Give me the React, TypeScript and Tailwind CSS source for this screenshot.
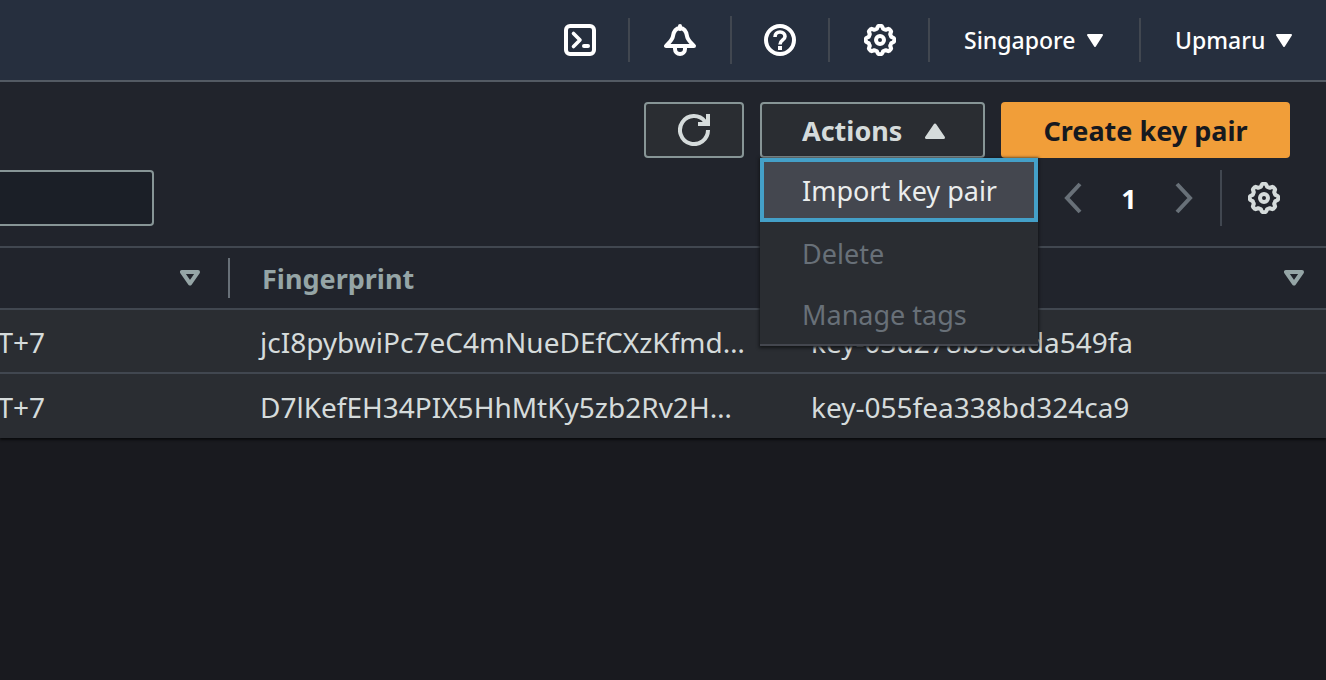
import type { ReactNode } from "react";

const GEAR_POINTS = Array.from({ length: 96 }, (_, i) => {
  const a = (i / 96) * Math.PI * 2;
  const wave = Math.cos(8 * a);
  const r = 12.9 + 1.3 * Math.tanh(wave * 2.6);
  return `${(16 + r * Math.sin(a)).toFixed(2)},${(16 - r * Math.cos(a)).toFixed(2)}`;
}).join(" ");

function GearIcon() {
  return (
    <svg viewBox="0 0 32 32" className="size-8" fill="none" stroke="currentColor" strokeWidth="4" strokeLinejoin="round" aria-hidden="true">
      <polygon points={GEAR_POINTS} />
      <circle cx="16" cy="16" r="4" />
    </svg>
  );
}

function TerminalIcon() {
  return (
    <svg viewBox="0 0 32 32" className="size-8" fill="none" stroke="currentColor" strokeWidth="4" aria-hidden="true">
      <rect x="2" y="2" width="28" height="28" rx="4" />
      <path d="M9.500 9.500l6.500 6.500-6.500 6.500" strokeLinecap="round" strokeLinejoin="round" strokeWidth="3.600" />
      <path d="M20 22h4" strokeLinecap="round" />
    </svg>
  );
}

function BellIcon() {
  return (
    <svg viewBox="0 0 32 32" className="size-8" fill="none" stroke="currentColor" strokeWidth="4" strokeLinejoin="round" aria-hidden="true">
      <path d="M16 4C10.500 4.500 9.500 8.500 9 12C8.500 16 5.500 18 2 22H30C26.500 18 23.500 16 23 12C22.500 8.500 21.500 4.500 16 4Z" />
      <path d="M16 2v3" strokeLinecap="round" />
      <path d="M11 23v2a5 5 0 0 0 10 0v-2" />
    </svg>
  );
}

function HelpIcon() {
  return (
    <svg viewBox="0 0 32 32" className="size-8" fill="none" stroke="currentColor" strokeWidth="4" aria-hidden="true">
      <circle cx="16" cy="16" r="14" />
      <path d="M11 13c0-3 2-5 5-5s5 1.800 5 4.500c0 3.500-5 3.500-5 8" strokeWidth="3.600" />
      <path d="M16 22v4" />
    </svg>
  );
}

function RefreshIcon() {
  return (
    <svg viewBox="0 0 32 32" className="size-8" fill="none" stroke="currentColor" strokeWidth="4" aria-hidden="true">
      <path d="M30 16A14 14 0 1 1 27 7.400L28.500 9.500" />
      <path d="M30 0v10H20" />
    </svg>
  );
}

function Chevron({ d }: { d: string }) {
  return (
    <svg viewBox="0 0 20 32" className="h-8 w-5" fill="none" stroke="currentColor" strokeWidth="4" aria-hidden="true">
      <path d={d} />
    </svg>
  );
}

function CaretDown() {
  return (
    <svg viewBox="0 0 16 13" className="h-[13px] w-4" fill="currentColor" stroke="currentColor" strokeWidth="2" strokeLinejoin="round" aria-hidden="true">
      <path d="M1 1h14L8 12z" />
    </svg>
  );
}

function CaretUp() {
  return (
    <svg viewBox="0 0 20 16" className="h-4 w-5" fill="currentColor" stroke="currentColor" strokeWidth="3" strokeLinejoin="round" aria-hidden="true">
      <path d="M1.500 14.500h17L10 2z" />
    </svg>
  );
}

function SortIcon() {
  return (
    <svg viewBox="0 0 20 16" className="h-4 w-5" fill="none" stroke="currentColor" strokeWidth="4" strokeLinejoin="round" aria-hidden="true">
      <path d="M2 2h16l-8 11.500z" />
    </svg>
  );
}

function NavIcon({ label, children }: { label: string; children: ReactNode }) {
  return (
    <button aria-label={label} className="flex w-24 justify-center">
      {children}
    </button>
  );
}

function Divider() {
  return <span className="h-11 w-0.5 bg-[#414750]" />;
}

const rows = [
  { created: "GMT+7", fingerprint: "jcI8pybwiPc7eC4mNueDEfCXzKfmd…", id: "key-03d278b36ada549fa" },
  { created: "GMT+7", fingerprint: "D7lKefEH34PIX5HhMtKy5zb2Rv2H…", id: "key-055fea338bd324ca9" },
];

export default function App() {
  return (
    <div className="min-h-screen overflow-x-hidden bg-[#191a1f] font-['Noto_Sans',sans-serif] text-[27px] leading-9 text-[#d5dbdb]">
      <header className="flex h-[82px] items-center justify-end border-b-2 border-[#545b64] bg-[#262f3e] text-[23px] font-medium text-white">
        <NavIcon label="CloudShell"><TerminalIcon /></NavIcon>
        <Divider />
        <div className="px-0.5"><NavIcon label="Notifications"><BellIcon /></NavIcon></div>
        <span className="h-12 w-0.5 bg-[#414750]" />
        <NavIcon label="Help"><HelpIcon /></NavIcon>
        <Divider />
        <div className="pl-0.5"><NavIcon label="Settings"><GearIcon /></NavIcon></div>
        <Divider />
        <button className="flex w-[209px] items-center justify-between pr-9 pl-[34px]">
          Singapore <CaretDown />
        </button>
        <Divider />
        <button className="flex w-[185px] items-center justify-between pr-[34px] pl-[34px]">
          Upmaru <CaretDown />
        </button>
      </header>

      <main className="bg-[#21242c] shadow-[0_2px_2px_#0a0b0d]">
        <div className="flex justify-end gap-4 pt-5 pr-9">
          <button aria-label="Refresh" className="flex h-14 w-[100px] items-center justify-center rounded border-2 border-[#879596] bg-[#2a2d32]">
            <RefreshIcon />
          </button>
          <div className="relative">
            <button aria-expanded="true" className="flex h-14 w-[225px] items-center justify-between rounded border-2 border-[#879596] bg-[#2a2d32] pt-px pr-[38px] pl-10 font-bold">
              Actions <CaretUp />
            </button>
            <div role="menu" className="absolute top-full left-0 z-10 flex w-[278px] flex-col border-b-2 border-[#44474f] bg-[#2a2d32] text-left shadow-[0_1px_3px_1px_#141619]">
              <button role="menuitem" className="h-16 border-4 border-[#44a0c8] bg-[#44474f] pt-0.5 pl-[38px] text-left text-[#eaeded]">
                Import key pair
              </button>
              <button role="menuitem" disabled className="h-[62px] pt-0.5 pl-[42px] text-left text-[#687078]">Delete</button>
              <button role="menuitem" disabled className="h-[60px] pt-0.5 pl-[42px] text-left text-[#687078]">Manage tags</button>
            </div>
          </div>
          <button className="h-14 w-[289px] rounded bg-[#f19e39] pt-0.5 font-bold text-[#16191f]">Create key pair</button>
        </div>

        <div className="flex items-center justify-between pt-3 pr-[46px] pb-5">
          <input aria-label="Filter key pairs" className="h-14 w-[154px] rounded-r border-2 border-l-0 border-[#879596] bg-[#1b1f27] px-4 outline-none" />
          <nav aria-label="Pagination" className="flex items-center">
            <button aria-label="Previous page" className="text-[#687078]"><Chevron d="M16 2L3 16l13 14" /></button>
            <button aria-current="page" className="w-[90px] pt-0.5 text-center font-bold text-white">1</button>
            <button aria-label="Next page" className="text-[#687078]"><Chevron d="M3 2l13 14L3 30" /></button>
            <span className="mx-[26px] h-14 w-0.5 bg-[#414750]" />
            <button aria-label="Preferences"><GearIcon /></button>
          </nav>
        </div>

        <table className="w-full table-fixed border-separate border-spacing-0 text-left">
          <colgroup>
            <col className="w-[230px]" />
            <col className="w-[549px]" />
            <col />
          </colgroup>
          <thead>
            <tr className="h-[62px] text-[#95a5a6]">
              <th className="border-t-2 border-[#414750] p-0">
                <div className="flex h-10 items-center justify-end border-r-2 border-[#687078] pr-7">
                  <button aria-label="Sort by created"><SortIcon /></button>
                </div>
              </th>
              <th className="border-t-2 border-[#414750] p-0 pt-0.5 pl-8 font-bold">Fingerprint</th>
              <th className="border-t-2 border-[#414750] p-0 pr-[22px]">
                <div className="flex justify-end">
                  <button aria-label="Sort by ID"><SortIcon /></button>
                </div>
              </th>
            </tr>
          </thead>
          <tbody className="text-[28px]">
            {rows.map((row) => (
              <tr key={row.id} className="h-16 bg-[#2a2d32] last:h-[66px]">
                <td className="overflow-hidden border-t-2 border-[#414750] p-0 pt-0.5">
                  <div className="flex w-[45px] justify-end">{row.created}</div>
                </td>
                <td className="border-t-2 border-[#414750] p-0 pt-0.5 pl-[30px] whitespace-nowrap">{row.fingerprint}</td>
                <td className="border-t-2 border-[#414750] p-0 pt-0.5 pl-8 whitespace-nowrap">{row.id}</td>
              </tr>
            ))}
          </tbody>
        </table>
      </main>
    </div>
  );
}
